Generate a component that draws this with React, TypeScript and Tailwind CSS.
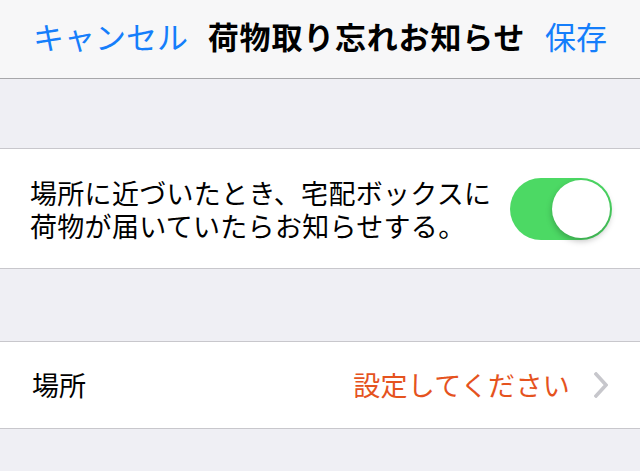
import React, { useState } from 'react';

const font = { fontFamily: '"Noto Sans CJK JP", "Noto Sans", sans-serif' };

const Toggle = ({ on, onChange }: { on: boolean; onChange: () => void }) => (
  <button
    onClick={onChange}
    className={`relative w-[102px] h-[62px] rounded-full shrink-0 transition-colors ${on ? 'bg-[#4cd964]' : 'bg-[#e5e5ea]'}`}
  >
    <span
      className={`absolute top-[2px] w-[58px] h-[58px] rounded-full bg-white shadow-[0_3px_6px_rgba(0,0,0,0.25)] transition-all ${on ? 'left-[42px]' : 'left-[2px]'}`}
    />
  </button>
);

export default function App() {
  const [on, setOn] = useState(true);
  return (
    <div className="w-[640px] h-[471px] bg-[#efeff4] overflow-hidden" style={font}>
      <div className="h-[79px] bg-[#f7f7f8] border-b border-[#a7a7aa] flex items-center justify-between pl-[33px] pr-[33px] pb-[8px]">
        <button className="text-[31px] text-[#157efb] leading-none">キャンセル</button>
        <h1 className="text-[31px] font-bold text-black leading-none tracking-[0.8px]">荷物取り忘れお知らせ</h1>
        <button className="text-[31px] text-[#157efb] leading-none">保存</button>
      </div>

      <div className="h-[69px]" />

      <div className="bg-white border-y border-[#c8c7cc] h-[121px] flex items-center justify-between pl-[30px] pr-[28px]">
        <p className="text-[27px] leading-[33px] tracking-[0.3px] text-black">
          場所に近づいたとき、宅配ボックスに
          <br />
          荷物が届いていたらお知らせする。
        </p>
        <Toggle on={on} onChange={() => setOn(!on)} />
      </div>

      <div className="h-[72px]" />

      <div className="bg-white border-y border-[#c8c7cc] h-[88px] flex items-center justify-between pl-[32px] pr-[32px]">
        <span className="text-[27px] text-black">場所</span>
        <div className="flex items-center gap-[24px]">
          <span className="text-[27px] tracking-[0.3px] text-[#e5531e]">設定してください</span>
          <svg width="14" height="26" viewBox="0 0 14 26" fill="none">
            <path d="M2 2 L12 13 L2 24" stroke="#c7c7cc" strokeWidth="3.5" strokeLinecap="square" />
          </svg>
        </div>
      </div>
    </div>
  );
}
